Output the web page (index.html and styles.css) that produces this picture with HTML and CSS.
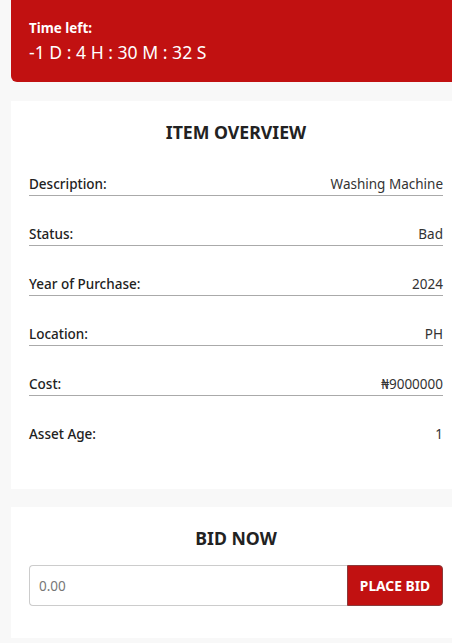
FILE: index.html
```html
<!DOCTYPE html>
<html lang="en">
<head>
<meta charset="utf-8">
<title>Item</title>
<link rel="stylesheet" href="styles.css">
</head>
<body>
<div class="page">
  <div class="timer">
    <div class="timer-label">Time left:</div>
    <div class="timer-value">-1 D : 4 H : 30 M : 32 S</div>
  </div>

  <section class="card overview">
    <h2 class="card-title">ITEM OVERVIEW</h2>
    <div class="rows">
      <div class="row"><span class="label">Description:</span><span class="value">Washing Machine</span></div>
      <div class="row"><span class="label">Status:</span><span class="value">Bad</span></div>
      <div class="row"><span class="label">Year of Purchase:</span><span class="value">2024</span></div>
      <div class="row"><span class="label">Location:</span><span class="value">PH</span></div>
      <div class="row"><span class="label">Cost:</span><span class="value">₦9000000</span></div>
      <div class="row last"><span class="label">Asset Age:</span><span class="value">1</span></div>
    </div>
  </section>

  <section class="card bid">
    <h2 class="card-title">BID NOW</h2>
    <div class="bid-form">
      <input class="bid-input" type="text" placeholder="0.00">
      <button class="bid-btn" type="button">PLACE BID</button>
    </div>
  </section>
</div>
</body>
</html>
```

FILE: styles.css
```css
html, body {
  margin: 0;
  padding: 0;
  background: #f8f8f8;
  overflow-x: hidden;
}
body {
  font-family: "Noto Sans", "Open Sans", sans-serif;
  color: #222;
}
.page {
  margin-left: 11px;
  width: 450px;
  display: flex;
  flex-direction: column;
}
.timer {
  background: #c11111;
  color: #fff;
  border-radius: 0 0 6px 6px;
  height: 82px;
  box-sizing: border-box;
  padding: 19px 18px 0 18px;
  margin-bottom: 19px;
}
.timer-label {
  font-size: 13.4px;
  font-weight: 700;
  line-height: 18px;
}
.timer-value {
  font-size: 17.6px;
  line-height: 24px;
  margin-top: 3px;
}
.card {
  background: #fff;
  padding: 19px 18px 0 18px;
}
.overview {
  padding-bottom: 43px;
  margin-bottom: 18px;
}
.bid {
  padding-bottom: 32px;
}
.card-title {
  margin: 0;
  text-align: center;
  font-size: 17.7px;
  line-height: 24px;
  font-weight: 700;
  color: #222;
}
.rows {
  margin-top: 31px;
  display: flex;
  flex-direction: column;
  gap: 29px;
}
.row {
  display: flex;
  justify-content: space-between;
  font-size: 13.5px;
  line-height: 18px;
  padding-bottom: 2px;
  border-bottom: 1px solid #aaa;
}
.row.last {
  border-bottom-color: transparent;
}
.label {
  color: #222;
  font-weight: 500;
}
.value {
  color: #333;
}
.bid-form {
  margin-top: 15px;
  display: flex;
  height: 41px;
}
.bid-input {
  flex: 1;
  min-width: 0;
  box-sizing: border-box;
  border: 1px solid #ccc;
  border-right: none;
  border-radius: 4px 0 0 4px;
  padding: 0 9px;
  font-family: inherit;
  font-size: 13.5px;
  color: #333;
  outline: none;
}
.bid-input::placeholder {
  color: #777;
}
.bid-btn {
  width: 96px;
  box-sizing: border-box;
  background: #c11111;
  color: #fff;
  border: 1px solid #8a3a3a;
  border-radius: 0 4px 4px 0;
  font-family: inherit;
  font-size: 13.8px;
  font-weight: 700;
  padding: 0;
}
```
